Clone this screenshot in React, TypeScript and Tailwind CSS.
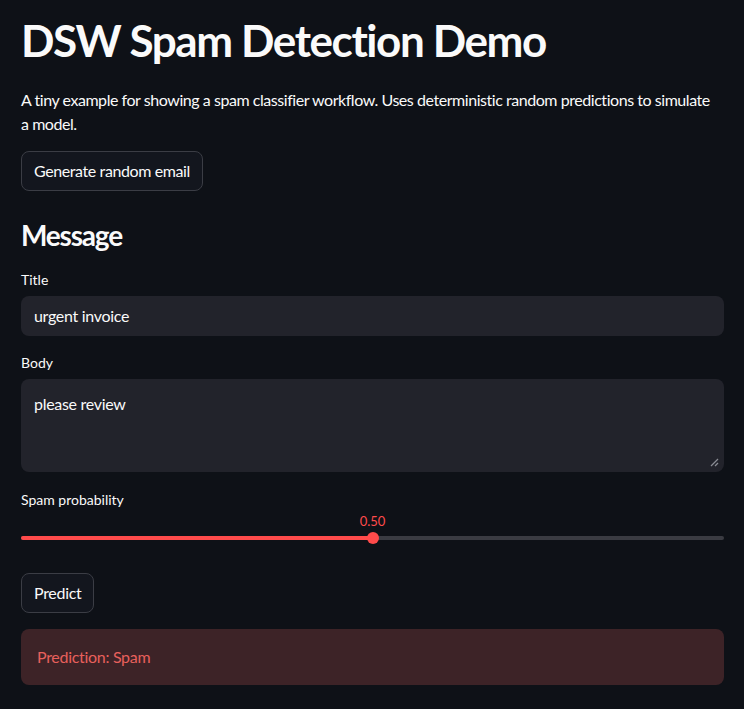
import React from "react";

export default function App() {
  const [value] = React.useState(0.5);
  const pct = value * 100;

  return (
    <div
      className="min-h-[709px] w-full bg-[#0e1117] text-[#fafafa]"
      style={{ fontFamily: "Lato, 'Noto Sans', sans-serif" }}
    >
      <div className="pl-[21px] pr-[20px] pt-[6px]">
        <h1 className="text-[44px] font-bold leading-[1.2] tracking-[-1.4px] py-[8px]">
          DSW Spam Detection Demo
        </h1>
        <p className="mt-[13px] pr-[12px] text-[16px] leading-[24px] tracking-[-0.45px]">
          A tiny example for showing a spam classifier workflow. Uses deterministic random predictions to simulate
          a model.
        </p>

        <button
          type="button"
          className="mt-[15px] h-[40px] px-[12px] rounded-[8px] border border-[#3b3d45] bg-[#13161e] text-[16px] tracking-[-0.4px] text-[#fafafa]"
        >
          Generate random email
        </button>

        <h3 className="mt-[28px] text-[28px] font-bold leading-[1.2] tracking-[-1.2px]">Message</h3>

        <label className="block mt-[18px] text-[14px] leading-[20px]">Title</label>
        <div className="mt-[6px] h-[40px] rounded-[8px] bg-[#22232b] flex items-center px-[13px] text-[16px] tracking-[-0.3px]">
          urgent invoice
        </div>

        <label className="block mt-[17px] text-[14px] leading-[20px]">Body</label>
        <div className="relative mt-[6px] h-[93px] rounded-[8px] bg-[#22232b] px-[13px] pt-[13px] text-[16px] leading-[24px] tracking-[-0.3px]">
          please review
          <svg
            className="absolute right-[5px] bottom-[5px]"
            width="10"
            height="10"
            viewBox="0 0 10 10"
          >
            <line x1="9" y1="2" x2="2" y2="9" stroke="#8a8c94" strokeWidth="1.2" />
            <line x1="9" y1="6" x2="6" y2="9" stroke="#8a8c94" strokeWidth="1.2" />
          </svg>
        </div>

        <label className="block mt-[18px] text-[14px] leading-[20px]">Spam probability</label>
        <div className="relative mt-[3px] h-[36px]">
          <div
            className="absolute top-0 -translate-x-1/2 text-[13px] leading-[16px] text-[#ff4b4b]"
            style={{ left: `${pct}%` }}
          >
            0.50
          </div>
          <div className="absolute left-0 right-0 top-[23px] h-[4px] rounded-full bg-[#3a3b42]">
            <div className="h-full rounded-full bg-[#ff4b4b]" style={{ width: `${pct}%` }} />
          </div>
          <div
            className="absolute top-[19px] w-[12px] h-[12px] -ml-[6px] rounded-full bg-[#ff4b4b]"
            style={{ left: `${pct}%` }}
          />
        </div>

        <button
          type="button"
          className="mt-[24px] h-[40px] px-[12px] rounded-[8px] border border-[#3b3d45] bg-[#13161e] text-[16px] tracking-[-0.3px] text-[#fafafa]"
        >
          Predict
        </button>

        <div className="mt-[16px] h-[56px] rounded-[8px] bg-[#3d2327] flex items-center px-[16px] text-[16px] tracking-[-0.3px] text-[#e8605c]">
          Prediction: Spam
        </div>
      </div>
    </div>
  );
}
